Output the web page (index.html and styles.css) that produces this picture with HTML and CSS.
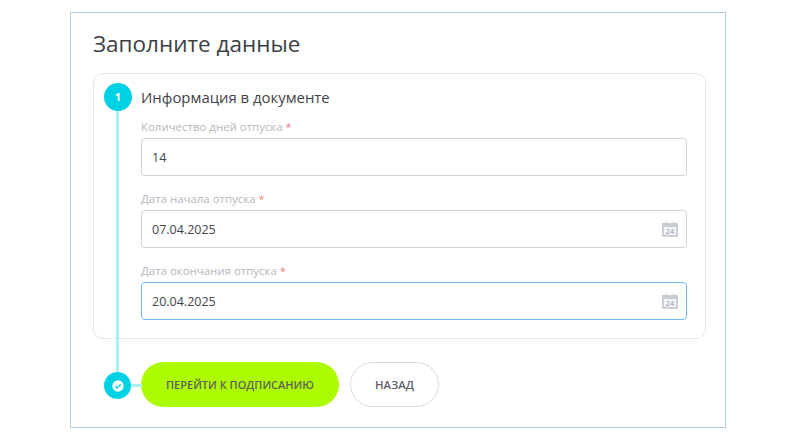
FILE: index.html
```html
<!DOCTYPE html>
<html lang="ru">
<head>
<meta charset="utf-8">
<title>Заполните данные</title>
<link rel="stylesheet" href="styles.css">
</head>
<body>
<main class="panel">
  <h1 class="title">Заполните данные</h1>
  <section class="card">
    <span class="step-num">1</span>
    <h2 class="section-title">Информация в документе</h2>
    <div class="field">
      <label class="label">Количество дней отпуска <span class="req">*</span></label>
      <div class="input"><span>14</span></div>
    </div>
    <div class="field">
      <label class="label">Дата начала отпуска <span class="req">*</span></label>
      <div class="input"><span>07.04.2025</span>
        <svg class="cal" viewBox="1 1.5 14 13.5"><path class="cal-body" d="M1 3h3V1.5h1V3h6V1.5h1V3h3v12H1z"/><rect class="cal-inner" x="2.5" y="6.5" width="11" height="7"/><text class="cal-text" x="8" y="12.6" text-anchor="middle">24</text></svg>
      </div>
    </div>
    <div class="field">
      <label class="label">Дата окончания отпуска <span class="req">*</span></label>
      <div class="input input-focus"><span>20.04.2025</span>
        <svg class="cal" viewBox="1 1.5 14 13.5"><path class="cal-body" d="M1 3h3V1.5h1V3h6V1.5h1V3h3v12H1z"/><rect class="cal-inner" x="2.5" y="6.5" width="11" height="7"/><text class="cal-text" x="8" y="12.6" text-anchor="middle">24</text></svg>
      </div>
    </div>
  </section>
  <div class="actions">
    <button class="btn btn-primary">ПЕРЕЙТИ К ПОДПИСАНИЮ</button>
    <button class="btn btn-back">НАЗАД</button>
  </div>
  <span class="rail"></span>
  <span class="rail-h"></span>
  <span class="step-check">
    <svg viewBox="0 0 16 16" width="14" height="14"><circle cx="8" cy="8" r="6.5" fill="#fff"/><path d="M5 8.2l2.1 2L11 6.2" fill="none" stroke="#00d2e6" stroke-width="1.7"/></svg>
  </span>
</main>
</body>
</html>
```
FILE: styles.css
```css
* { box-sizing: border-box; }
html, body { margin: 0; background: #fff; }
body { padding: 12px 61px 10px 70px; font-family: "Open Sans", sans-serif; color: #3f4248; }
.panel {
  position: relative;
  height: 416px;
  border: 1px solid #b5cfdc;
  padding: 15px 19px 0 22px;
}
.title { margin: 0; font-size: 22.5px; line-height: 32px; font-weight: 400; color: #3c3f45; }
.card {
  position: relative;
  margin-top: 13px;
  height: 266px;
  border: 1px solid #e5e8ec;
  border-radius: 10px;
  padding: 13px 18px 0 47px;
}
.section-title { margin: 0; font-size: 14.9px; line-height: 20px; font-weight: 400; color: #3f4248; }
.field { margin-top: 14px; }
.section-title + .field { margin-top: 11px; }
.label { display: block; font-size: 11.45px; line-height: 18px; color: #b3b7c0; margin-bottom: 2px; }
.req { color: #ef7f86; font-size: 11px; }
.input {
  display: flex;
  align-items: center;
  justify-content: space-between;
  height: 38px;
  border: 1px solid #cdd3dc;
  border-radius: 4px;
  padding: 0 8px 0 10px;
  font-size: 12.5px;
  color: #42454b;
}
.input-focus { border-color: #6cb9f4; }
.cal { width: 16px; height: 16px; display: block; }
.cal-body { fill: #c8ccd2; }
.cal-inner { fill: #f2f3f5; }
.cal-text { font-size: 6.5px; font-weight: 700; fill: #b8bdc5; font-family: "Open Sans", sans-serif; }
.step-num {
  position: absolute;
  left: 10px;
  top: 9px;
  width: 28px;
  height: 28px;
  border-radius: 50%;
  background: #00d2e6;
  color: #fff;
  font-size: 11px;
  font-weight: 700;
  line-height: 28px;
  text-align: center;
  z-index: 2;
}
.actions { display: flex; gap: 11px; margin: 23px 0 0 48px; }
.btn {
  height: 45px;
  border-radius: 23px;
  font-family: "Open Sans", sans-serif;
  font-size: 11px;
  font-weight: 600;
  padding: 0;
}
.btn-primary { width: 198px; border: 0; background: #adfb00; color: #5d6356; }
.btn-back { width: 89px; border: 1px solid #d5dae3; background: #fff; color: #5f626d; font-size: 11.4px; }
.rail { position: absolute; left: 45px; top: 98px; width: 3px; height: 275px; background: #aaf0f7; }
.rail-h { position: absolute; left: 47px; top: 371px; width: 24px; height: 3px; background: #aaf0f7; }
.step-check {
  position: absolute;
  left: 33px;
  top: 359px;
  width: 27px;
  height: 27px;
  border-radius: 50%;
  background: #00d2e6;
  display: flex;
  align-items: center;
  justify-content: center;
}
```
